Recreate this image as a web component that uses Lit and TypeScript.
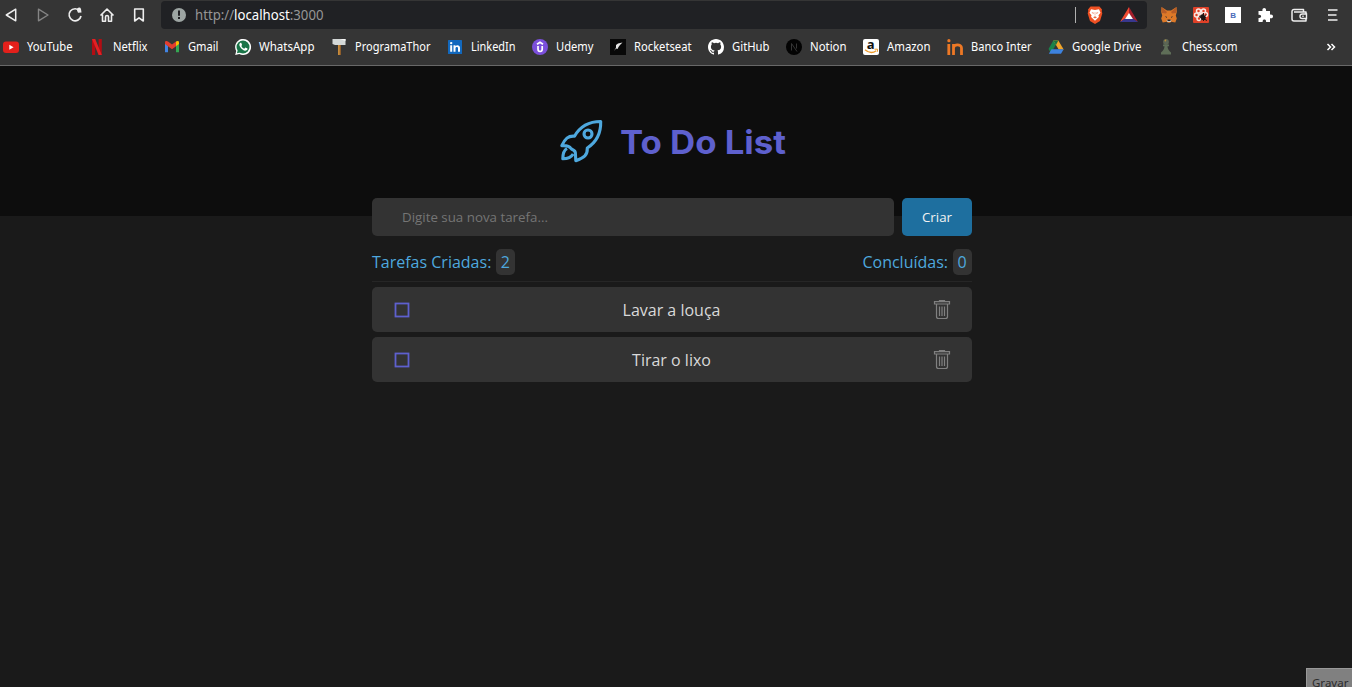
import { LitElement, html, css, svg } from 'lit';
import { customElement } from 'lit/decorators.js';

const bookmarks: [string, number, unknown][] = [
  ['YouTube', 46, svg`<rect y="2.5" width="16" height="11.5" rx="3" fill="#e3201b"/><path d="M6.3 5.7v5l4.3-2.5z" fill="#fff"/>`],
  ['Netflix', 35, svg`<path d="M3 0h3.2v16H3zM9.6 0h3.2v16H9.6z" fill="#b30d13"/><path d="M3 0h3.2l6.6 16H9.6z" fill="#e32024"/>`],
  ['Gmail', 31, svg`<path d="M1 4v9.3h3V7z" fill="#4285e4"/><path d="M12 7v6.3h3V4z" fill="#34a853"/><path d="M1 3.5C1 2 2.8 1.7 4 2.6l4 3 4-3v4.6l-4 3-4-3L1 5z" fill="#e33d2e"/><path d="M12 2.6c1.2-.9 3-.6 3 .9V5l-3 2.2z" fill="#fbbc04"/>`],
  ['WhatsApp', 56, svg`<path d="M.2 16l1-4A8 8 0 1 1 4.3 15z" fill="#fff"/><circle cx="8" cy="8" r="6.5" fill="#197447"/><path d="M1.9 14.3l.9-3.2 2.5 2.5z" fill="#197447"/><path d="M5.5 3.8c-1.5.8-1.5 2.4-.3 4.2 1.5 2.3 3.8 4 5.8 3.6 1.5-.4 1.6-1.3 1.5-2l-2.2-1-1 1.1C7.9 9.2 6.9 8 6.3 6.900l.8-1-.9-2.100z" fill="#fff"/>`],
  ['ProgramaThor', 76, svg`<path d="M7 5h3v11H7z" fill="#c98b3a"/><path d="M8.700 6h1.300v10H8.700z" fill="#8d5d2b"/><path d="M1.500 0h13v6H4L1.500 5z" fill="#d4d8d7"/><path d="M9 0h5.500v2z" fill="#f6f7f5"/>`],
  ['LinkedIn', 45, svg`<rect x="1" y="1" width="14" height="14" rx=".6" fill="#1268bd"/><path d="M3.200 6.300h2v6.500h-2zM6.500 6.300h2v1c1.200-1.900 4.500-1.400 4.500 1.500v4h-2V9.300c0-2-2.500-1.800-2.500.1v3.400h-2z" fill="#fff"/><circle cx="4.200" cy="4.100" r="1.200" fill="#fff"/>`],
  ['Udemy', 38, svg`<circle cx="8" cy="8" r="8" fill="#7b4fdb"/><path d="M5 5.200l3-2 3 2M6 6.900v3.400c0 2.900 4.200 2.900 4.200 0V6.900" fill="none" stroke="#fff" stroke-width="1.700"/>`],
  ['Rocketseat', 58, svg`<path d="M0 0h16v16H0z" fill="#080808"/><path d="M4 12l2-3.500 0-2.500 2-1.500L12.500 3.500 10 6 8.500 8l-1 2-1.500-.5z" fill="#e6e6e6"/>`],
  ['GitHub', 38, svg`<path fill="#fff" d="M8 0C3.580 0 0 3.580 0 8c0 3.540 2.290 6.530 5.470 7.590.4.070.55-.17.55-.38 0-.19-.01-.82-.01-1.490-2.010.37-2.530-.49-2.690-.94-.09-.23-.48-.94-.82-1.130-.28-.15-.68-.52-.01-.53.63-.01 1.080.58 1.230.82.72 1.210 1.870.87 2.330.66.070-.52.28-.87.51-1.070-1.780-.2-3.640-.89-3.640-3.950 0-.87.31-1.590.82-2.150-.08-.2-.36-1.020.08-2.120 0 0 .67-.21 2.200.82a7.400 7.400 0 0 1 4 0c1.530-1.040 2.200-.82 2.200-.82.44 1.100.16 1.920.08 2.120.51.56.82 1.270.82 2.150 0 3.070-1.870 3.750-3.650 3.950.29.25.54.73.54 1.480 0 1.070-.01 1.930-.01 2.200 0 .21.15.46.55.38A8 8 0 0 0 16 8c0-4.420-3.580-8-8-8z"/>`],
  ['Notion', 37, svg`<circle cx="8" cy="8" r="8" fill="#030303"/><path d="M5.500 11.500v-7l5.500 8M10.500 4.500v5" fill="none" stroke="#353535"/>`],
  ['Amazon', 44, svg`<rect width="16" height="16" rx="2" fill="#fff"/><text x="3.700" y="10" class="amazon">a</text><path d="M2 10.800c3.500 3 8 3.300 11.300 1" fill="none" stroke="#ee9b2b" stroke-width="1.400"/><path d="M11.500 10.200h3v2.500" fill="none" stroke="#ee9b2b"/>`],
  ['Banco Inter', 61, svg`<path d="M1.800 5v11M6.500 16V5M6.500 9c0-4.200 8-4.300 8 0v7" fill="none" stroke="#ed7825" stroke-width="2.800"/><circle cx="1.900" cy="1.700" r="1.600" fill="#ed7825"/>`],
  ['Google Drive', 70, svg`<path d="M5.300 1.500h5L3 14.300.500 10z" fill="#19824a"/><path d="M5.300 1.500h5l5.400 9h-5z" fill="#f0a52a"/><path d="M5.300 1.500h5L8 6z" fill="#19703f"/><path d="M3.500 10.300h12.200L13 14.800H.800z" fill="#3d82df"/>`],
  ['Chess.com', 56, svg`<circle cx="8" cy="3" r="2.900" fill="#5c6555"/><path d="M5 5.500h6v1.700H9.500c.1 2.500 1 4 3.500 6.300V15.500H3v-2C5.500 11.200 6.300 9.700 6.500 7.200H5z" fill="#5f6e58"/><path d="M6.500 1c1-1 2-.5 2 0L7 3z" fill="#b78c38"/>`],
];

@customElement('browser-bar')
class BrowserBar extends LitElement {
  static styles = css`
    :host { display: block; height: 65px; background: #353535; border-bottom: 1px solid #686868; color: #fff; font-family: "Noto Sans", "Open Sans", sans-serif; }
    svg { display: block; overflow: visible; flex: none; }
    .bar { display: flex; height: 30px; align-items: center; }
    .nav { display: flex; gap: 16px; padding-left: 3px; width: 158px; box-sizing: content-box; }
    .address { display: flex; align-items: center; box-sizing: border-box; width: 986px; height: 28px; padding: 0 9px 0 10px; background: #202124; border-radius: 4px; margin-top: -1px; }
    .url { flex: 1; margin-left: 8px; }
    .dim { fill: #969696; } .lit { fill: #fff; }
    .url text { font-size: 14px; }
    .divider { width: 1px; height: 16px; background: #b0b0b0; margin-right: 11px; }
    .brand { display: flex; gap: 17px; }
    .extensions { display: flex; gap: 16px; padding-left: 14px; }
    .wallet { margin-left: 2px; }
    .menu { margin-left: 1px; }
    .bookmarks { display: flex; align-items: center; gap: 16px; height: 34px; padding: 0 16px 0 3px; }
    .bookmark { display: flex; align-items: center; gap: 8px; }
    .bookmark text { font-size: 12px; fill: #fff; }
    .bookmark .amazon { font: 700 13px "Open Sans", sans-serif; fill: #111; }
    .more { margin-left: auto; }
    .letter { font: 700 8px "Liberation Sans", sans-serif; fill: #4a6cb9; }
  `;
  render() {
    return html`
      <div class="bar">
        <div class="nav">
          <svg width="16" height="16" fill="none" stroke="#eee" stroke-width="1.500"><path d="M12.700 2.200v11.600L3.300 8z" stroke-linejoin="round"/></svg>
          <svg width="16" height="16" fill="none" stroke="#858585" stroke-width="1.400"><path d="M3.500 2.200v11.600L13 8z" stroke-linejoin="round"/></svg>
          <svg width="16" height="16"><path d="M12.800 4A6 6 0 1 0 14 9" fill="none" stroke="#eee" stroke-width="1.700"/><path d="M10 3.500a2 2 0 0 1 4-1.500l.5 3.500-3.500.3z" fill="#eee"/></svg>
          <svg width="16" height="16"><path d="M1.500 8.500L8 2l6.500 6.500M3.500 7.500v6.700h3V10a1.500 1.500 0 0 1 3 0v4.200h3V7.500" fill="none" stroke="#eee" stroke-width="1.600" stroke-linejoin="round"/></svg>
          <svg width="16" height="16"><path d="M3.700 2h8.600v12L8 10.800 3.700 14z" fill="none" stroke="#eee" stroke-width="1.600" stroke-linejoin="round"/></svg>
        </div>
        <div class="address">
          <svg width="16" height="16"><circle cx="8" cy="8" r="7" fill="#9da5a3"/><path d="M7 3.500h2v5.300H7zM7 10h2v2H7z" fill="#202124"/></svg>
          <svg class="url" height="20"><text x="0" y="15" textLength="128.500" lengthAdjust="spacingAndGlyphs" class="dim">http://<tspan class="lit">localhost</tspan>:3000</text></svg>
          <div class="divider"></div>
          <div class="brand">
            <svg width="16" height="18"><path d="M3.500 .5h9l2.500 3-.3 1.500.6 2.500-2.300 7.500L8 18l-5-3L.700 7.500 1.300 5 1 3.500z" fill="#f05123"/><path d="M4 3.300l4 .7 4-.7 1.500 3.400-2 2.600.4 1.700L8 14.700 4.100 11l.4-1.700-2-2.600z" fill="#fff"/><path d="M4.500 6.200l2.300.5-.5 1.200zM11.500 6.200l-2.300.5.5 1.200zM6 11.200l2-1 2 1-2 1.400z" fill="#e66a47"/><path d="M8 6v3.500" stroke="#efa58d" stroke-width=".7"/></svg>
            <svg width="18" height="18"><path d="M9 1v6.500L5 13l-5 3z" fill="#f24b31"/><path d="M9 1L18 16l-5-3-4-5.500z" fill="#a41f2c"/><path d="M0 16l5-3.500h8l5 3.500z" fill="#38378d"/><path d="M9 7l4 6H5z" fill="#fff"/></svg>
          </div>
        </div>
        <div class="extensions">
          <svg width="16" height="16"><path d="M.5 0L6 3.500h4L15.500 0l.3 5-1 3.500 1 3-1.500 4-4-.8L9 15.700H7l-1.300-1-4 .8-1.500-4 1-3L.200 5z" fill="#dd7928"/><path d="M.5 0L6 5 5 6.500 1 6zM15.500 0L10 5l1 1.500 4-.5z" fill="#b75c26"/><path d="M4 9l2 1-.5 1zM12 9l-2 1 .5 1z" fill="#282d33"/><path d="M5.500 13h5l-.7 2H6.200z" fill="#c9c3b9"/><path d="M6.500 12.500h3v1.500h-3z" fill="#292526"/></svg>
          <svg width="16" height="16"><rect width="16" height="16" rx="1" fill="#e04128"/><g fill="#e04128" stroke="#f9e8e2" stroke-width="1.500"><circle cx="5.500" cy="4" r="2"/><circle cx="10.500" cy="4" r="2"/><circle cx="3.500" cy="8" r="2"/><circle cx="12.500" cy="7.500" r="2"/><circle cx="6" cy="11.500" r="2"/></g><circle cx="7.800" cy="7.300" r="1.800" fill="#f9e8e2"/><path d="M7.500 8l2.500-1 3 3-1 3-3 0-2-3z" fill="#1b1513"/><path d="M6 9.500l8 4M8 13.500l5-6M10.500 6v8" stroke="#1b1513"/></svg>
          <svg width="16" height="16"><path d="M0 0h16v16H0z" fill="#fff"/><text x="5.200" y="11" class="letter">B</text></svg>
          <svg width="16" height="16"><path d="M1.500 4h4c-1-4 4.500-4 3.500 0h4v3.700c4-1 4 4.500 0 3.500V15H9c.8-3.500-4-3.500-3.300 0H1.500v-4c3.500.6 3.500-4 0-3.300z" fill="#fff"/></svg>
          <svg class="wallet" width="16" height="16"><path d="M12.500 5V2.500H3a2 2 0 0 0-2 2V12a2 2 0 0 0 2 2h12V5H3" fill="none" stroke="#eee" stroke-width="1.500" stroke-linejoin="round"/><path d="M15.500 7h-4.300a2 2 0 0 0 0 4.500h4.300z" fill="#353535" stroke="#eee" stroke-width="1.400"/><path d="M11 9.200h2" stroke="#eee"/></svg>
          <svg class="menu" width="16" height="16"><path d="M4 3h9.500M4 8h8.500M4 13h9.500" stroke="#eee" stroke-width="1.600"/></svg>
        </div>
      </div>
      <div class="bookmarks">
        ${bookmarks.map(([name, width, icon]) => html`<div class="bookmark"><svg width="16" height="16">${icon}</svg><svg width=${width} height="16"><text y="12" textLength=${width - 0.5} lengthAdjust="spacingAndGlyphs">${name}</text></svg></div>`)}
        <svg class="more" width="10" height="10"><path d="M1.500 2l3 3-3 3M5.500 2l3 3-3 3" fill="none" stroke="#fff" stroke-width="1.500"/></svg>
      </div>`;
  }
}

@customElement('app-root')
class AppRoot extends LitElement {
  static styles = css`
    :host { display: flex; flex-direction: column; position: relative; height: 687px; overflow: hidden; background: #1a1a1a; color: #d9d9d9; font: 16px/22px "Open Sans", sans-serif; }
    svg { display: block; overflow: visible; }
    header { height: 150px; flex: none; display: flex; align-items: center; justify-content: center; gap: 18px; padding-right: 8px; box-sizing: border-box; background: #0d0d0d; }
    .title { font: 700 33px "Inter", sans-serif; fill: #5e60ce; }
    main { width: 600px; margin: -18px 0 0 372px; }
    .form { display: flex; gap: 8px; height: 38px; }
    .input { flex: 1; display: flex; align-items: center; padding-left: 30px; background: #333; border-radius: 5px; font-size: 13.330px; color: #757575; }
    .create { width: 70px; border: 0; padding: 0; border-radius: 5px; background: #1e6f9f; color: #f2f2f2; font: 500 13.330px "Open Sans", sans-serif; }
    .summary { display: flex; justify-content: space-between; height: 26px; margin-top: 13px; color: #4ea8de; }
    .count { display: flex; align-items: center; gap: 5px; }
    .badge { box-sizing: border-box; width: 19px; padding-right: 1px; line-height: 26px; border-radius: 5px; background: #333; text-align: center; }
    .rule { height: 1px; margin: 6px 0 5px; background: #262626; }
    .task { display: flex; align-items: center; justify-content: space-between; box-sizing: border-box; height: 45px; margin-bottom: 5px; padding: 0 22px 0 21px; border-radius: 5px; background: #333; }
    .name { margin-right: 2px; }
    .record { position: absolute; right: 0; bottom: 0; box-sizing: border-box; width: 46px; height: 19px; overflow: hidden; white-space: nowrap; padding: 4px 0 0 5px; border: 1px solid #999; border-width: 1px 0 0 1px; background: #808080; color: #2c2c2c; font: 11.500px/19px "Noto Sans", sans-serif; }
  `;
  render() {
    return html`
      <browser-bar></browser-bar>
      <header>
        <svg width="44" height="44" fill="none" stroke="#4ea8de" stroke-width="3.100" stroke-linejoin="round">
          <path d="M41.700 2.500C29 2.500 20.500 8.500 15.500 17.200c-6.500-.6-9.500 2.600-12.700 9.500 5.500-.5 7.500.3 9.200 2.800 1.700 2 4.600 1.500 4.400 5l.4 7.200c8.500-3 11.800-5.500 11.500-12.700C37.500 23 42 15 41.700 2.500z"/>
          <circle cx="29" cy="15" r="4"/>
          <path d="M8 29.500c-4 2.200-4.200 6-4.200 10.300 5 0 8.400-1.400 10.400-4.800"/>
        </svg>
        <svg width="164" height="44"><text class="title" x="-1" y="34.600" textLength="166" lengthAdjust="spacingAndGlyphs">To Do List</text></svg>
      </header>
      <main>
        <div class="form"><div class="input">Digite sua nova tarefa...</div><button class="create">Criar</button></div>
        <div class="summary">
          <div class="count">Tarefas Criadas: <span class="badge">2</span></div>
          <div class="count">Concluídas: <span class="badge">0</span></div>
        </div>
        <div class="rule"></div>
        ${['Lavar a louça', 'Tirar o lixo'].map((task) => html`
          <div class="task">
            <svg width="18" height="18"><rect x="2.500" y="2.500" width="13" height="13" fill="none" stroke="#5e60ce" stroke-width="1.800"/></svg>
            <span class="name">${task}</span>
            <svg width="16" height="20" fill="none" stroke="#808080"><path d="M5.500 1.500V.7h5v.8M.5 1.700h15v2.300H.5zM2.500 4.500v12a2 2 0 0 0 2 2h7a2 2 0 0 0 2-2V4.500M5.500 6.500v9.500M8 6.500v9.500M10.500 6.500v9.500" stroke-width="1.200"/></svg>
          </div>`)}
      </main>
      <div class="record">Gravar</div>`;
  }
}
